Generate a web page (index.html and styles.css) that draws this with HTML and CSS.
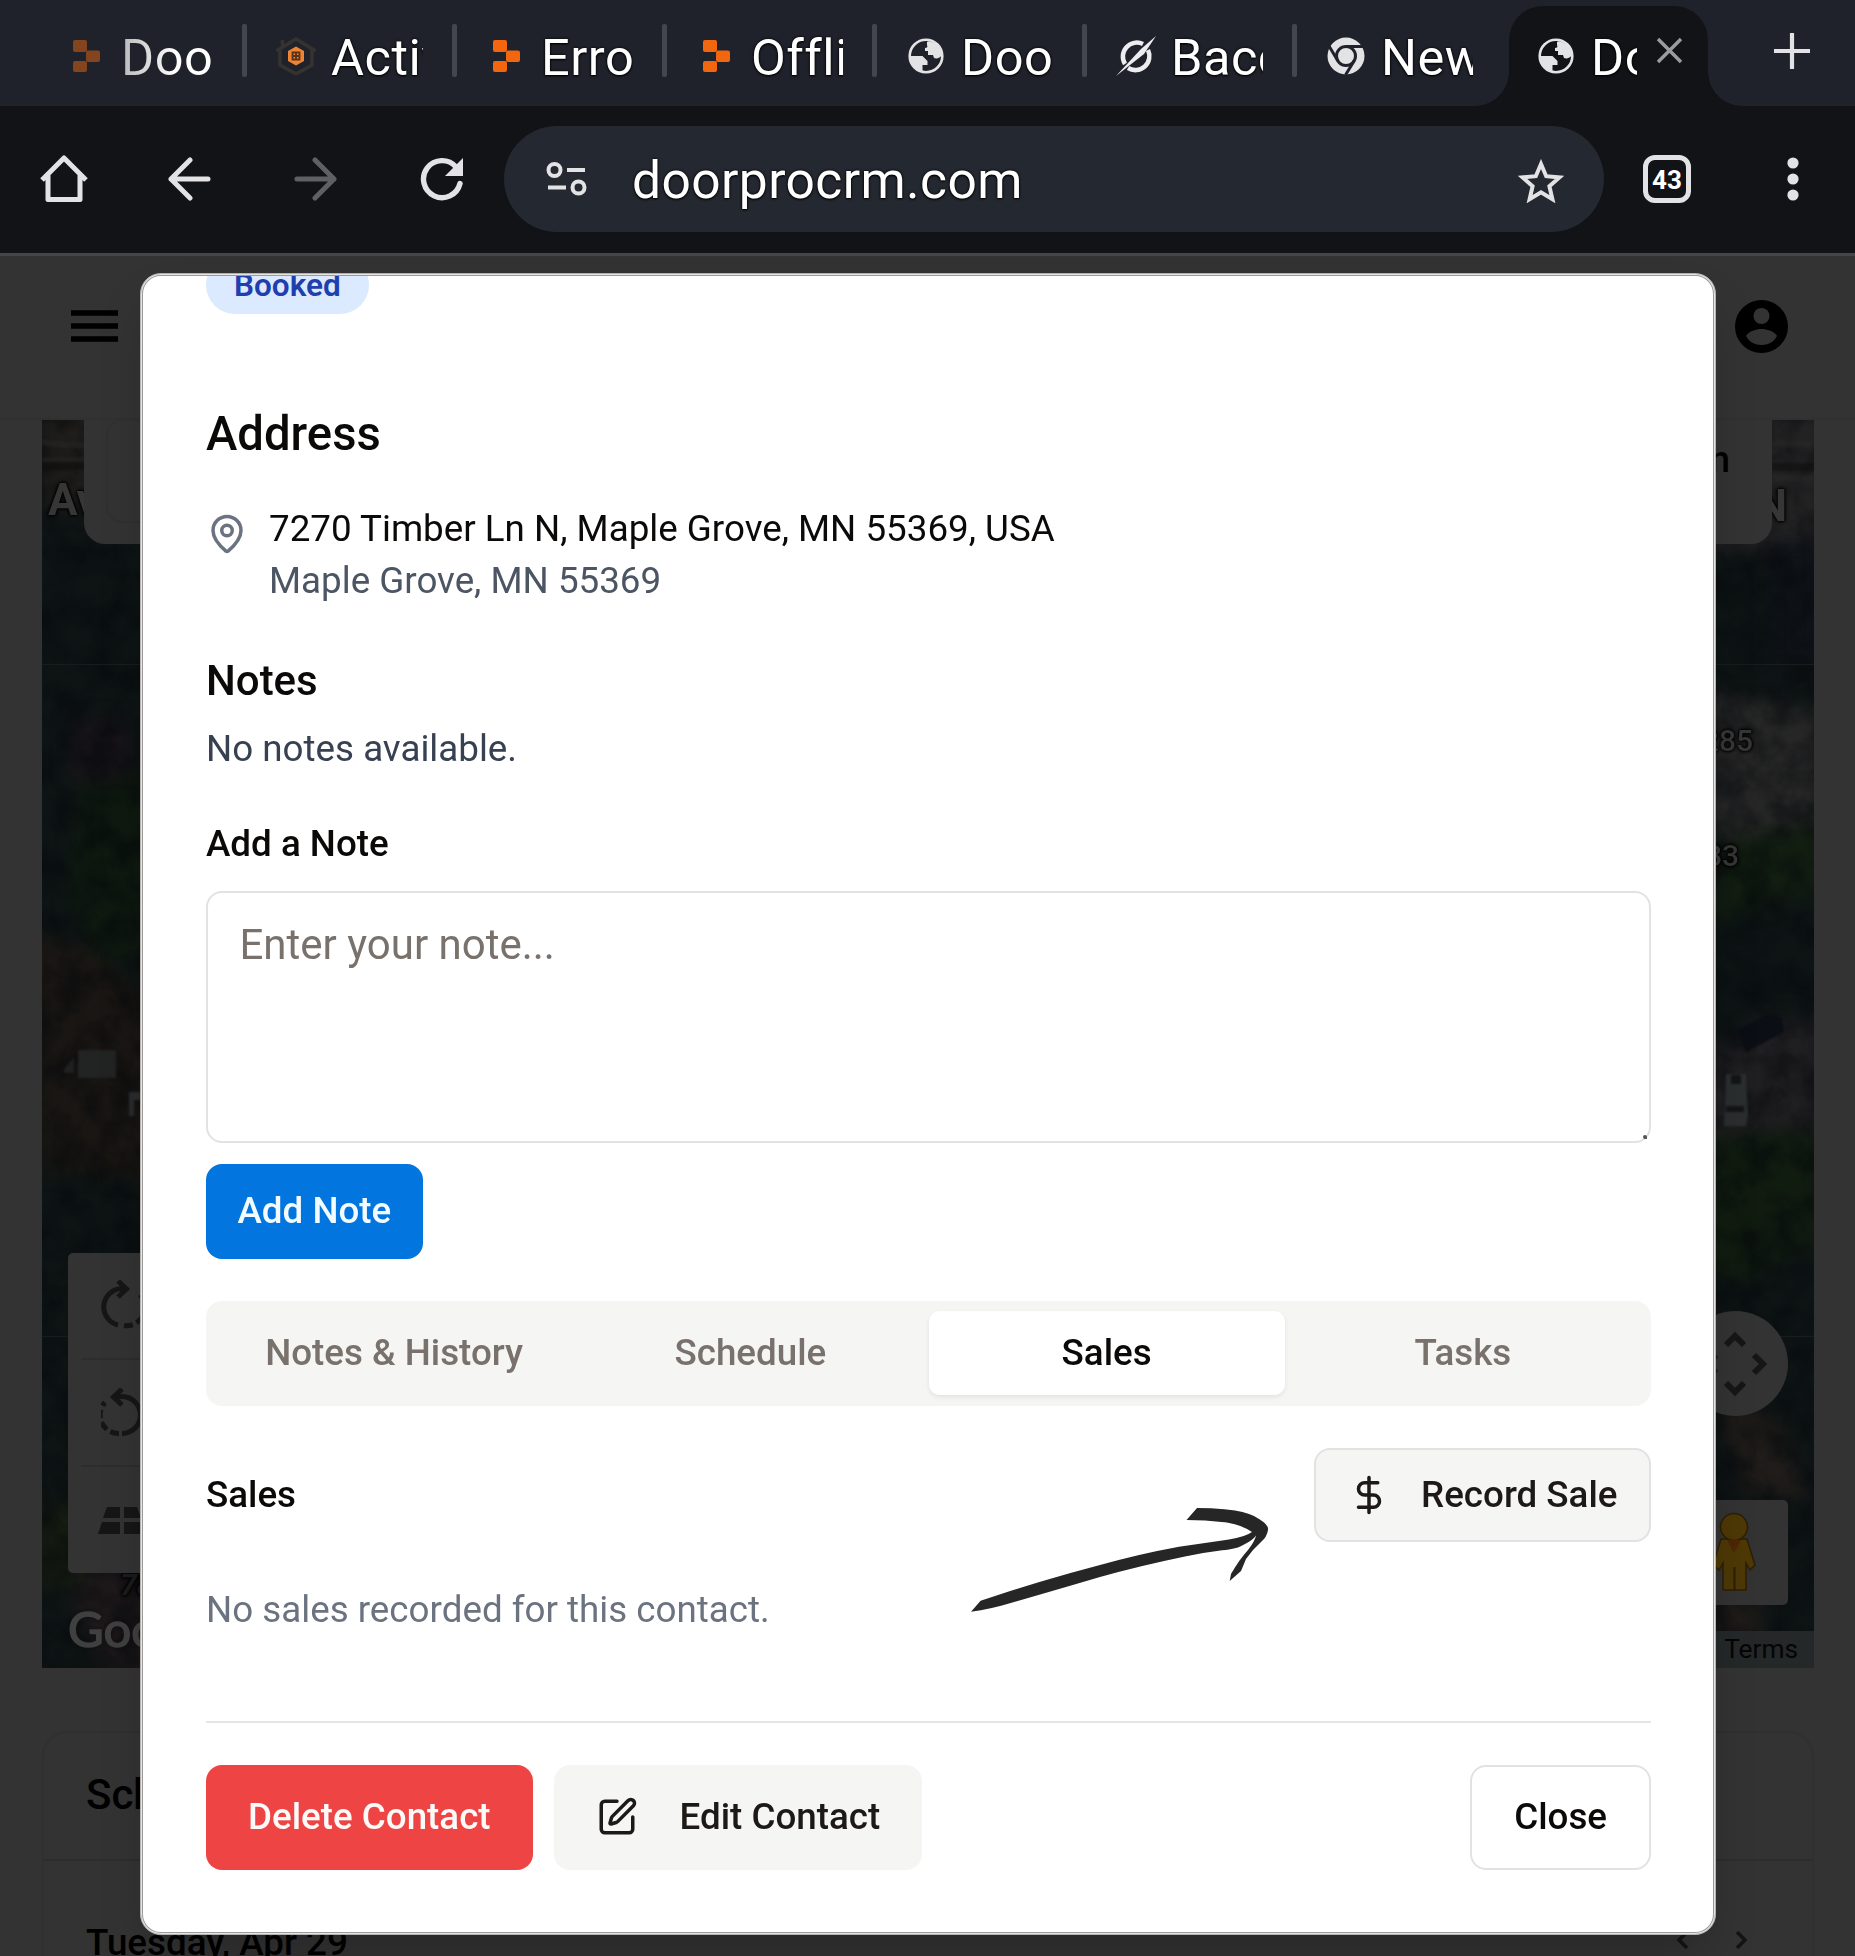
FILE: index.html
```html
<!DOCTYPE html>
<html lang="en">
<head>
<meta charset="utf-8">
<title>doorprocrm.com</title>
<link rel="stylesheet" href="styles.css">
</head>
<body>
<svg class="defs" aria-hidden="true">
  <symbol id="globe" viewBox="0 0 36 36"><circle cx="18" cy="18" r="16.3" fill="none" stroke="#e3e3e6" stroke-width="2.6"/><path fill="#e3e3e6" d="M2 18h12.500l5 5v4h-5v7C6 32 1 25 2 18zM19 4c1-1 3-1 5 0 6 2 10 8 10 13-2 3-5 4-8 3l-1-3h-5v-4h-3v-3c2 0 3-1 2-3z"/></symbol>
  <symbol id="blocks" viewBox="0 0 28 32"><rect x="0" y="0" width="14" height="12" rx="2"/><rect x="0" y="21" width="14" height="11" rx="2"/><rect x="13" y="10.500" width="14" height="11.500" rx="2"/></symbol>
</svg>
<header class="browser">
  <div class="tabs">
    <div class="tab"><span class="fav"><svg class="blocks dim"><use href="#blocks"/></svg></span><span class="title fade">Doo</span></div>
    <div class="tab"><span class="fav"><svg width="42" height="38" viewBox="0 0 42 38"><path d="M1.500 14L21 2l19.500 12M5 12v16l16 9 16-9V12M7.500 3v7" fill="none" stroke="#35332f" stroke-width="3.600"/><path d="M21 9.500l8 4.500v10l-8 4.500-8-4.500V14z" fill="#ee8434"/><path d="M17.500 15.500h7v7h-7zM21 15.500v7M17.500 19h7" fill="none" stroke="#5b3417" stroke-width="1.800"/></svg></span><span class="title">Activ</span></div>
    <div class="tab"><span class="fav"><svg class="blocks"><use href="#blocks"/></svg></span><span class="title">Erro</span></div>
    <div class="tab"><span class="fav"><svg class="blocks"><use href="#blocks"/></svg></span><span class="title">Offli</span></div>
    <div class="tab"><span class="fav"><svg width="36" height="36"><use href="#globe"/></svg></span><span class="title">Doo</span></div>
    <div class="tab"><span class="fav"><svg width="42" height="42" viewBox="0 0 42 42"><path d="M28 9A14 14 0 0 0 10 29M13 33A14 14 0 0 0 33 15" fill="none" stroke="#ededf0" stroke-width="4.500"/><path d="M1 41L26 14 41 1 29 19z" fill="#ededf0"/></svg></span><span class="title">Bacc</span></div>
    <div class="tab last"><span class="fav"><svg width="38" height="38" viewBox="0 0 38 38"><circle cx="19" cy="19" r="18.500" fill="#e3e3e6"/><circle cx="19" cy="19" r="9.500" fill="#e3e3e6" stroke="#1f222b" stroke-width="3"/><path d="M19 9.500h18M10.800 23.800L2 9M27.200 23.800L18.500 38" stroke="#1f222b" stroke-width="3"/></svg></span><span class="title">New</span></div>
    <div class="tab active"><span class="fav"><svg width="36" height="36"><use href="#globe"/></svg></span><span class="title">Doo</span><svg class="x" width="27" height="27" viewBox="0 0 27 27"><path d="M2 2l23 23M25 2L2 25" stroke="#9b9ca1" stroke-width="3.400"/></svg></div>
    <svg class="plus" width="36" height="36" viewBox="0 0 36 36"><path d="M18 1v34M1 18h34" stroke="#e3e3e6" stroke-width="4.200" stroke-linecap="round"/></svg>
  </div>
  <div class="toolbar">
    <svg class="home" width="48" height="48" viewBox="0 0 48 48"><path d="M8 19v25.500h32V19M2 25L24 3l22 22" fill="none" stroke="#e3e3e6" stroke-width="5" stroke-linejoin="round"/></svg>
    <svg class="back" width="44" height="44" viewBox="0 0 44 44"><path d="M41 22H4M23 3L4 22l19 19" fill="none" stroke="#e3e3e6" stroke-width="5" stroke-linecap="round" stroke-linejoin="round"/></svg>
    <svg class="fwd" width="44" height="44" viewBox="0 0 44 44"><path d="M3 22h37M21 3l19 19-19 19" fill="none" stroke="#5f6063" stroke-width="5" stroke-linecap="round" stroke-linejoin="round"/></svg>
    <svg class="reload" width="44" height="44" viewBox="0 0 44 44"><path d="M40 26.500A18.500 18.500 0 1 1 36 10" fill="none" stroke="#e3e3e6" stroke-width="5.400" stroke-linecap="round"/><path d="M43 1v18H25z" fill="#e3e3e6"/></svg>
    <div class="omnibox">
      <svg class="tune" width="42" height="36" viewBox="0 0 42 36"><g fill="none" stroke="#e3e3e6" stroke-width="4"><circle cx="8.500" cy="9" r="6"/><circle cx="32.500" cy="26.500" r="6"/><path d="M21 9h18M2 26.500h18"/></g></svg>
      <span class="url">doorprocrm.com</span>
      <svg class="star" width="46" height="44" viewBox="0 0 46 44"><path d="M23 5l5.200 12.200 13.200 1.200-10 8.800 3 13L23 33.400l-11.400 6.800 3-13-10-8.800 13.200-1.200z" fill="none" stroke="#e3e3e6" stroke-width="4"/></svg>
    </div>
    <span class="count">43</span>
    <svg class="dots" width="12" height="44" viewBox="0 0 12 44"><g fill="#e3e3e6"><circle cx="6" cy="6" r="5.600"/><circle cx="6" cy="22" r="5.600"/><circle cx="6" cy="38" r="5.600"/></g></svg>
  </div>
</header>

<main class="page">
  <div class="nav">
    <svg width="48" height="32" viewBox="0 0 48 32"><path d="M0 3h47M0 16h47M0 29h47" stroke="#000" stroke-width="5.400"/></svg>
    <svg width="53" height="53" viewBox="0 0 53 53"><circle cx="26.500" cy="26.500" r="26.500" fill="#000"/><circle cx="26.500" cy="16" r="8" fill="#333"/><path d="M11 36c3-5 10-7 15.500-7S39 31 42 36c-3 6-9 9-15.500 9S14 42 11 36z" fill="#333"/></svg>
  </div>
  <section class="map">
    <svg class="sat" width="1772" height="1248" viewBox="42 420 1772 1248">
      <defs>
        <filter id="soft" x="-20%" y="-20%" width="140%" height="140%" color-interpolation-filters="sRGB"><feGaussianBlur stdDeviation="9"/></filter>
        <filter id="blur1" x="-20%" y="-20%" width="140%" height="140%" color-interpolation-filters="sRGB"><feGaussianBlur stdDeviation="1.300"/></filter>
        <filter id="grain" x="0" y="0" width="100%" height="100%" color-interpolation-filters="sRGB"><feTurbulence type="fractalNoise" baseFrequency=".035" numOctaves="4" seed="7"/><feColorMatrix values="0 0 0 0 .02  0 0 0 0 .03  0 0 0 0 .045  2.600 0 0 0 -.95"/></filter>
      </defs>
      <rect x="42" y="420" width="1772" height="1248" fill="#0e1414"/>
      <g filter="url(#soft)">
        <path d="M42 410h110v100H42z" fill="#1f1d1b"/>
        <path d="M80 780q60-20 80 0v170l-60 10-30-60z" fill="#0e190f"/>
        <path d="M70 720h60v60H70z" fill="#171418"/>
        <path d="M30 930l60 20 70 60v170l-120-10z" fill="#191613"/>
        <path d="M42 1500l50 20v60l-50 10z" fill="#151c10"/>
        <path d="M85 1570h80v110l-60-10-30-60z" fill="#1e191b"/>
        <path d="M1700 410h130v130l-80 10h-50z" fill="#232223"/>
        <path d="M1770 540h50v130h-50z" fill="#0f1318"/>
        <path d="M1700 690l120 20v110l-60 20-60-10z" fill="#262626"/>
        <path d="M1730 840l90-20v70l-110 30z" fill="#121e11"/>
        <path d="M1700 1060l60-40 60 0v110h-90l-40 40z" fill="#1f1e20"/>
        <path d="M1700 1140l120-10v110l-80 40-40-10z" fill="#111c10"/>
        <path d="M1720 1400l60 20 30 80-70-10z" fill="#1f1c1a"/>
        <path d="M1700 1600h60v80h-60z" fill="#1e1b19"/>
      </g>
      <rect x="42" y="420" width="1772" height="1248" filter="url(#grain)" opacity=".45"/>
      <path d="M42 664.500h99M1715 664.500h99M42 1336.500h30M1780 1336.500h34" stroke="#171c1d" stroke-width="1"/>
      <g filter="url(#blur1)">
        <path d="M42 442q30 6 99 0M42 460h99M1772 444h42M1772 478h42" stroke="#2a2825" fill="none" stroke-width="6" opacity=".5"/>
        <path d="M42 466h99M1772 467h42" stroke="#0f0f0e" stroke-width="8" opacity=".6"/>
        <path d="M78 1050h38v28H78z" fill="#222323"/><path d="M64 1069l10-12v16h-10z" fill="#1f2020"/>
        <path d="M129 1092h12v8h-7v16h-5z" fill="#2b2c2d"/>
        <path d="M1738 1030l30-16 14 4 2 14-38 20z" fill="#0b0e14"/>
        <path d="M1726 1074h20l2 40-2 12h-22l1-20z" fill="#2b2e2f"/><path d="M1731 1075h10v9h-10zM1726 1106h18v6h-18z" fill="#121415"/>
      </g>
    </svg>
    <span class="lbl av">Ave</span>
    <span class="lbl en">N</span>
    <span class="lbl n285">7285</span>
    <span class="lbl n283">7283</span>
    <span class="lbl n78">78</span>
    <div class="searchcard"><div class="searchbox"></div><span>in</span></div>
    <div class="rotate">
      <svg width="44" height="50" viewBox="0 0 44 50"><g fill="none" stroke="#161616" stroke-width="5"><path d="M17 45A18.500 18.500 0 0 1 21 8.500h4"/><path d="M17 1l8.500 8-8.500 8"/><path d="M23 45.500a18.500 18.500 0 0 0 16-31" stroke-dasharray="9 4"/></g></svg>
      <svg width="44" height="50" viewBox="0 0 44 50"><g fill="none" stroke="#161616" stroke-width="5"><path d="M21 45.500a18.500 18.500 0 0 0 0-37h-7"/><path d="M21 1l-8.500 8 8.500 8"/><path d="M18 45.500a18.500 18.500 0 0 1-14-31" stroke-dasharray="9 4"/></g></svg>
      <svg width="50" height="28" viewBox="0 0 50 28"><path d="M9 0h13v11H5zM26 0h13l4 11H26zM4 15h18v12H0zM26 15h18l5 12H26z" fill="#161616"/></svg>
    </div>
    <div class="pan"><svg width="64" height="64" viewBox="0 0 64 64"><path d="M23 13l9-9 9 9M23 51l9 9 9-9M13 23l-9 9 9 9M51 23l9 9-9 9" fill="none" stroke="#161616" stroke-width="6"/></svg></div>
    <div class="peg"><svg width="46" height="80" viewBox="0 0 46 80"><g fill="#4d3806" stroke="#2c2004" stroke-width="1.500"><path d="M10 27h26l8 26-5 5-4-7v27H12V51l-4 7-6-5z"/><circle cx="23" cy="15" r="13.500"/></g><path d="M16 28h14l-7 13z" fill="#4d2606"/><path d="M23.500 55v24" stroke="#2c2004" stroke-width="2"/></svg></div>
    <span class="google">Google</span>
    <span class="terms">Terms</span>
  </section>
  <section class="schedule">
    <h2>Schedule</h2>
    <div class="day"><span>Tuesday, Apr 29</span><svg width="70" height="18" viewBox="0 0 70 18"><path d="M10 1L2 9l8 8M60 1l8 8-8 8" fill="none" stroke="#141414" stroke-width="3.500"/></svg></div>
  </section>

  <div class="dialog" role="dialog">
    <div class="badge-clip"><span class="badge">Booked</span></div>
    <h2 class="address-title">Address</h2>
    <div class="address">
      <svg width="42" height="42" viewBox="0 0 24 24" fill="none" stroke="#6b7280" stroke-width="2" stroke-linecap="round" stroke-linejoin="round"><path d="M20 10c0 4.993-5.539 10.193-7.399 11.799a1 1 0 0 1-1.202 0C9.539 20.193 4 14.993 4 10a8 8 0 0 1 16 0"/><circle cx="12" cy="10" r="3"/></svg>
      <div><p>7270 Timber Ln N, Maple Grove, MN 55369, USA</p><p class="sub">Maple Grove, MN 55369</p></div>
    </div>
    <h3 class="notes-title">Notes</h3>
    <p class="notes-empty">No notes available.</p>
    <label class="add-label" for="note">Add a Note</label>
    <div class="field"><textarea id="note" placeholder="Enter your note..."></textarea><i class="grip"></i></div>
    <button class="btn primary">Add Note</button>
    <div class="seg"><span>Notes &amp; History</span><span>Schedule</span><span class="on">Sales</span><span>Tasks</span></div>
    <div class="sales-row">
      <h4>Sales</h4>
      <button class="btn record"><svg width="42" height="42" viewBox="0 0 24 24" fill="none" stroke="#1c1917" stroke-width="2" stroke-linecap="round" stroke-linejoin="round"><path d="M12 2v20M17 5H9.500a3.500 3.500 0 0 0 0 7h5a3.500 3.500 0 0 1 0 7H6"/></svg>Record Sale</button>
    </div>
    <p class="sales-empty">No sales recorded for this contact.</p>
    <div class="footer">
      <button class="btn danger">Delete Contact</button>
      <button class="btn edit"><svg width="42" height="42" viewBox="0 0 24 24" fill="none" stroke="#1c1917" stroke-width="2" stroke-linecap="round" stroke-linejoin="round"><path d="M12 3H5a2 2 0 0 0-2 2v14a2 2 0 0 0 2 2h14a2 2 0 0 0 2-2v-7"/><path d="M18.375 2.625a1 1 0 0 1 3 3l-9.013 9.014a2 2 0 0 1-.853.505l-2.873.84a.5.5 0 0 1-.62-.62l.84-2.873a2 2 0 0 1 .506-.852z"/></svg>Edit Contact</button>
      <button class="btn close">Close</button>
    </div>
    <svg class="arrow" width="300" height="106" viewBox="971 1507 300 106"><path fill="#262626" d="M972 1611.700L981.600 1600.700Q1040 1581 1101 1565Q1140 1554 1180 1546.700L1230 1539.500Q1246 1537 1253 1532Q1243 1525 1229 1522.700Q1208 1520 1187.500 1520L1198 1508Q1220 1508 1236 1510.500Q1252 1513 1260 1519Q1270 1525 1269 1530Q1268 1537 1262 1542Q1253 1550 1247 1559L1242 1571L1230.700 1581L1232 1574Q1240 1560 1249 1550Q1256 1541 1257 1535.500Q1254 1540 1246 1544Q1240 1548 1230 1549.500Q1208 1552 1186 1556.500Q1140 1566 1101 1577Q1050 1592 1010 1603.500Q992 1609 972 1611.700Z"/></svg>
  </div>
</main>
</body>
</html>
```
FILE: styles.css
```css
* { box-sizing: border-box; margin: 0; padding: 0; }
html, body { width: 1855px; height: 1956px; overflow: hidden; }
body { font-family: Roboto, "Liberation Sans", sans-serif; background: #333; color: #0c0a09; }
svg { display: block; flex: none; }
.defs { position: absolute; width: 0; height: 0; }

/* browser chrome */
.browser { height: 256px; background: #121317; border-bottom: 3px solid #44454c; }
.tabs { display: flex; height: 106px; padding-left: 34px; background: #1f222b; }
.tab { display: flex; align-items: center; position: relative; width: 210px; height: 112px; padding-left: 31px; flex: none; }
.tab::after { content: ""; position: absolute; right: -3px; top: 24px; width: 5px; height: 53px; border-radius: 2px; background: #44464f; }
.tab.last::after { display: none; }
.fav { display: flex; justify-content: center; width: 42px; margin-right: 14px; flex: none; }
.blocks { width: 28px; height: 32px; fill: #f2660f; margin-left: 2px; }
.blocks.dim { fill: #84451e; }
.title { width: 92px; margin-top: 3px; overflow: hidden; white-space: nowrap; font-size: 50.500px; line-height: 70px; letter-spacing: .5px; color: #fff; text-shadow: 0 0 3px #000, 0 1px 2px #000; }
.title.fade { background: linear-gradient(90deg, #b9b9bb, #fff 60%); background-clip: text; color: transparent; text-shadow: none; }
.tab.active { width: 199px; height: 106px; margin: 6px 0 0 5px; padding: 0 0 6px 26px; border-radius: 34px 34px 0 0; background: #121317; }
.tab.active::before, .tab.active::after { content: ""; position: absolute; left: -34px; right: auto; top: auto; bottom: 6px; width: 34px; height: 34px; border-radius: 0; background: radial-gradient(circle at 0 0, transparent 33.500px, #121317 34px); }
.tab.active::after { left: auto; right: -34px; background: radial-gradient(circle at 100% 0, transparent 33.500px, #121317 34px); }
.tab.active .title { width: 46px; }
.tab.active .x { margin: 0 0 12px 19px; }
.plus { margin: 33px 0 0 66px; }
.toolbar { display: flex; align-items: center; height: 147px; padding: 0 0 1px 40px; }
.back { margin-left: 79px; }
.fwd { margin-left: 83px; }
.reload { margin-left: 82px; }
.omnibox { display: flex; align-items: center; width: 1100px; height: 106px; margin-left: 40px; padding: 0 40px 0 42px; border-radius: 53px; background: #242830; }
.url { margin: 4px 0 0 44px; font-size: 51.500px; line-height: 70px; letter-spacing: .4px; color: #fff; text-shadow: 0 0 3px #000, 0 1px 2px #000; }
.star { margin: 4px 0 0 auto; }
.count { width: 48px; height: 48px; margin-left: 39px; border: 5px solid #e3e3e6; border-radius: 12px; font-size: 26px; font-weight: 700; line-height: 40px; text-align: center; color: #fff; }
.dots { margin-left: 96px; }

/* dimmed page behind the dialog */
.page { position: relative; height: 1700px; background: #333; overflow: hidden; }
.nav { display: flex; justify-content: space-between; align-items: center; height: 164px; padding: 0 67px 22px 71px; border-bottom: 2px solid #303030; }
.map { position: relative; width: 1772px; height: 1248px; margin-left: 42px; overflow: hidden; }
.lbl { position: absolute; font-weight: 700; color: #363636; text-shadow: 0 0 4px #050505, 0 0 4px #050505, 0 0 2px #050505, 0 0 2px #050505; line-height: 40px; }
.av { left: 6px; top: 60px; font-size: 44px; }
.en { right: 27px; top: 66px; font-size: 44px; }
.n285 { right: 61px; top: 301px; font-size: 30px; font-weight: 500; }
.n283 { right: 75px; top: 416px; font-size: 30px; font-weight: 500; }
.n78 { left: 78px; top: 1145px; font-size: 30px; font-style: italic; color: #1b1b1b; }
.searchcard { position: absolute; left: 42px; right: 42px; top: -20px; height: 144px; padding: 20px 42px 0 22px; border-radius: 0 0 21px 21px; background: #333; display: flex; justify-content: space-between; font-size: 36.750px; font-weight: 500; line-height: 79px; color: #000; }
.searchbox { width: 900px; height: 104px; margin-top: -1px; border: 2px solid #303030; border-radius: 16px; }
.rotate { position: absolute; left: 26px; top: 833px; width: 105px; height: 320px; border-radius: 5px; background: #333; padding-left: 33px; }
.rotate svg { margin-top: 27px; }
.rotate svg + svg { margin-top: 58px; }
.rotate svg:last-child { margin: 69px 0 0 -3px; }
.rotate::before, .rotate::after { content: ""; position: absolute; left: 13px; width: 80px; height: 2px; top: 105px; background: #2d2d2d; }
.rotate::after { top: 212px; }
.pan { position: absolute; right: 26px; top: 891px; width: 105px; height: 105px; border-radius: 50%; background: #333; display: flex; align-items: center; justify-content: center; padding-right: 1px; }
.peg { position: absolute; right: 26px; top: 1080px; width: 105px; height: 105px; border-radius: 5px; background: #333; display: flex; justify-content: center; padding: 12px 4px 0 0; }
.google { position: absolute; left: 26px; top: 1178px; font-family: Lato, sans-serif; font-size: 49px; font-weight: 400; -webkit-text-stroke: 1.500px #404040; line-height: 60px; color: #404040; text-shadow: 0 0 4px #111, 0 0 3px #111; }
.terms { position: absolute; right: 0; bottom: 0; width: 110px; height: 37px; padding-right: 16px; text-align: right; font-size: 26.250px; line-height: 36px; color: #050505; background: #242829; }
.schedule { height: 500px; margin: 63px 41px 0 42px; border: 2px solid #303030; border-radius: 26px; }
.schedule h2 { height: 128px; padding-left: 42px; border-bottom: 2px solid #2d2d2d; font-size: 42px; font-weight: 500; line-height: 124px; color: #000; }
.day { display: flex; justify-content: space-between; align-items: flex-start; padding: 61px 65px 0 42px; font-size: 36.750px; font-weight: 500; line-height: 42px; color: #000; }
.day svg { margin-top: 9px; }

/* dialog */
.dialog { position: absolute; left: 140px; top: 17px; width: 1576px; height: 1662px; padding: 0 65px 0 66px; border-radius: 21px; background: #fff; border: 1px solid #b4b2b0; box-shadow: inset 0 0 0 1px #e7e5e4, inset 0 0 0 2px #9c9a98, 0 26px 50px -12px rgba(0,0,0,.25); font-size: 36.750px; line-height: 52.500px; }
.dialog > * { margin-left: -1px; margin-right: -1px; }
.badge-clip { height: 38px; margin-top: 2px; overflow: hidden; display: flex; align-items: flex-end; }
.badge { height: 58px; padding: 0 28px; border-radius: 29px; background: #dbeafe; color: #1e40af; font-size: 31.500px; font-weight: 600; line-height: 60px; }
.address-title { margin-top: 90px; font-size: 47.250px; font-weight: 500; line-height: 60px; }
.address { display: flex; gap: 21px; margin-top: 39px; }
.address svg { margin-top: 10px; }
.address .sub { line-height: 50.500px; margin-bottom: 1px; color: #4b5563; }
.notes-title { margin-top: 42px; font-size: 42px; font-weight: 500; line-height: 63px; }
.notes-empty { margin-top: 11px; color: #374151; }
.add-label { display: block; margin-top: 42px; font-weight: 500; }
.field { position: relative; height: 252px; margin-top: 21px; }
textarea { display: block; width: 100%; height: 252px; padding: 20px 31.500px; border: 2px solid #e2e2e2; border-radius: 16px; resize: none; background: #fff; font: 42px/63px Roboto, sans-serif; }
textarea::placeholder { color: #78716c; opacity: 1; }
.grip { position: absolute; right: 4px; bottom: 4px; width: 4px; height: 4px; border-radius: 2px 2px 0 2px; background: #555; }
.btn { display: flex; align-items: center; border: 0; border-radius: 16px; font: 500 36.750px/52.500px Roboto, sans-serif; white-space: nowrap; color: #1c1917; background: #f5f5f4; }
.primary { height: 95px; margin-top: 21px; padding: 0 31.500px; color: #f2fbff; background: #0275de; }
.dialog > .primary { margin-left: -1px; }
.seg { display: grid; grid-template-columns: repeat(4, 1fr); height: 105px; margin-top: 42px; padding: 10px; border-radius: 16px; background: #f5f5f4; }
.seg span { display: flex; align-items: center; justify-content: center; font-weight: 500; color: #78716c; }
.seg .on { height: 84px; color: #0c0a09; background: #fff; border-radius: 11px; box-shadow: 0 2px 5px rgba(0,0,0,.08); }
.sales-row { display: flex; justify-content: space-between; align-items: center; height: 94px; margin-top: 42px; }
.sales-row h4 { font-size: 36.750px; font-weight: 500; }
.record { height: 94px; padding: 0 31.500px; border: 2px solid #e2e2e2; gap: 31.500px; }
.sales-empty { margin-top: 42px; color: #6b7280; }
.footer { display: flex; margin-top: 84px; padding-top: 42px; border-top: 2px solid #e5e5e5; }
.footer .btn { height: 105px; padding: 0 42px; }
.footer .danger { background: #ef4444; color: #fafaf9; }
.footer .edit { margin-left: 21px; gap: 42px; }
.footer .close { margin-left: auto; background: #fff; border: 2px solid #e2e2e2; color: #0c0a09; }
.arrow { position: absolute; left: 830px; top: 1233px; }
```
